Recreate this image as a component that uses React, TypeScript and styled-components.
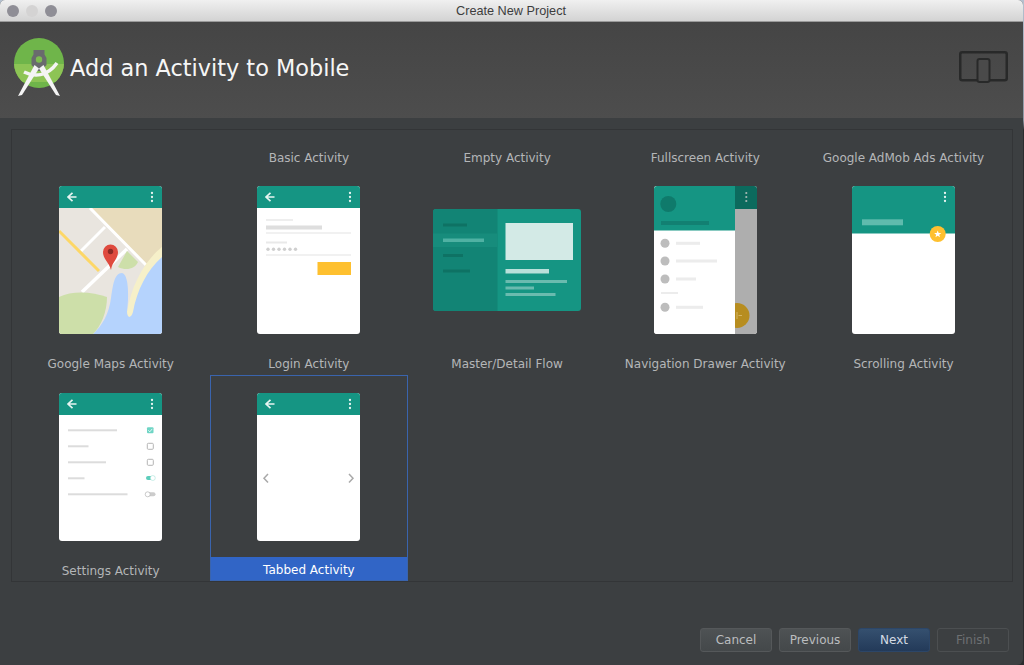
import React from "react";
import styled, { createGlobalStyle } from "styled-components";

const GlobalStyle = createGlobalStyle`
  html, body {
    margin: 0;
    padding: 0;
    width: 1024px;
    height: 665px;
    overflow: hidden;
    background: linear-gradient(#b4c0cf 0, #8f98a3 120px, #2a2c2e 130px, #2a2c2e 100%);
    font-family: "DejaVu Sans", sans-serif;
  }
`;

const Window = styled.div`
  width: 1023px;
  height: 665px;
  display: flex;
  flex-direction: column;
  background: #3c3f41;
  border-radius: 5px 5px 6px 0;
  overflow: hidden;
`;

const TitleBar = styled.div`
  height: 21px;
  flex: none;
  display: flex;
  align-items: center;
  position: relative;
  background: linear-gradient(#f0f0f0, #d3d3d3);
  border-bottom: 1px solid #9a9a9a;
`;

const Lights = styled.div`
  display: flex;
  gap: 7px;
  padding-left: 7px;
`;

const Light = styled.span<{ $dim?: boolean }>`
  width: 12px;
  height: 12px;
  border-radius: 50%;
  background: ${(p) => (p.$dim ? "#d4d3d3" : "#8f8e96")};
`;

const WindowTitle = styled.div`
  position: absolute;
  left: 0;
  right: 1px;
  text-align: center;
  font-family: "Liberation Sans", sans-serif;
  font-size: 12.7px;
  color: #3d3d3d;
`;

const Header = styled.div`
  height: 96px;
  flex: none;
  box-sizing: border-box;
  display: flex;
  align-items: flex-start;
  justify-content: space-between;
  padding: 16px 14px 0 14px;
  background: linear-gradient(#454545, #4d4d4d);
`;

const Brand = styled.div`
  display: flex;
  align-items: flex-start;
  gap: 6px;
`;

const Heading = styled.h1`
  margin: 14px 0 0;
  font-size: 22.4px;
  line-height: 32px;
  font-weight: 400;
  color: #f6f6f6;
`;

const DeviceIcon = styled.svg`
  margin-top: 13px;
`;

const Panel = styled.div`
  width: 1000px;
  margin: 11px 0 0 11px;
  border: 1px solid #333537;
  padding-top: 14px;
  flex: none;
`;

const Grid = styled.div`
  display: grid;
  margin-left: -0.4px;
  grid-template-columns: repeat(5, 198.2px);
  grid-template-rows: 24px 206.6px 206.6px;
`;

const Caption = styled.div<{ $selected?: boolean }>`
  height: 24px;
  box-sizing: border-box;
  padding-top: ${(p) => (p.$selected ? 1 : 1.8)}px;
  line-height: 24px;
  text-align: center;
  white-space: nowrap;
  font-size: 12px;
  color: ${(p) => (p.$selected ? "#ffffff" : "#b4b6b8")};
  background: ${(p) => (p.$selected ? "#3165c6" : "transparent")};
`;

const Cell = styled.div<{ $selected?: boolean }>`
  display: flex;
  flex-direction: column;
  align-items: stretch;
  justify-content: space-between;
  box-sizing: border-box;
  padding-top: 18px;
  position: relative;
  &::before {
    content: "";
    display: ${(p) => (p.$selected ? "block" : "none")};
    position: absolute;
    inset: 0;
    border: 1px solid #3a64ad;
    pointer-events: none;
  }
`;

const ThumbSlot = styled.div`
  height: 148px;
  display: flex;
  align-items: center;
  justify-content: center;
`;

const Thumb = styled.div<{ $wide?: boolean }>`
  width: ${(p) => (p.$wide ? 148 : 103)}px;
  height: ${(p) => (p.$wide ? 102 : 148)}px;
  border-radius: 3px;
  overflow: hidden;
  filter: blur(0.35px);
  svg {
    display: block;
  }
`;

const Footer = styled.div`
  display: flex;
  justify-content: flex-end;
  gap: 7px;
  margin-top: 46px;
  padding-right: 14px;
`;

const Button = styled.button<{ $variant?: "primary" | "disabled" }>`
  width: 72px;
  height: 24px;
  padding: 0;
  border-radius: 3px;
  font-family: "DejaVu Sans", sans-serif;
  font-size: 12px;
  border: 1px solid
    ${(p) => (p.$variant === "primary" ? "#2c4668" : p.$variant === "disabled" ? "#4c4f51" : "#55585a")};
  color: ${(p) => (p.$variant === "primary" ? "#d4dbe4" : p.$variant === "disabled" ? "#6d7072" : "#bbbdbf")};
  background: ${(p) =>
    p.$variant === "primary"
      ? "linear-gradient(#35506f, #233a59)"
      : p.$variant === "disabled"
      ? "transparent"
      : "linear-gradient(#4e5254, #44484a)"};
`;

const TEAL = "#159583";

const Logo = () => (
  <svg width="50" height="60" viewBox="0 0 50 60">
    <defs>
      <clipPath id="logoDisc">
        <circle cx="25" cy="25" r="25" />
      </clipPath>
    </defs>
    <circle cx="25" cy="25" r="25" fill="#6fb54a" />
    <g clipPath="url(#logoDisc)">
      <rect x="0" y="26" width="50" height="18" fill="#8dc455" />
    </g>
    <path d="M19.500 12H30.500V16.500L32.500 20V27L27 33H23L17.500 27V20L19.500 16.500Z" fill="#696b6d" />
    <circle cx="25" cy="21.500" r="3.200" fill="#7dbb50" />
    <path d="M20.500 27L25 30.500L8 57L4 58Z" fill="#f4f4f4" />
    <path d="M29.500 27L25 30.500L42 57L46 58Z" fill="#f4f4f4" />
    <path d="M10 34C20 39 33 39 43 25" fill="none" stroke="#f4f4f4" strokeWidth="3.500" />
  </svg>
);

const AppBar = ({ back = true, tint = "#e6f4f1" }: { back?: boolean; tint?: string }) => (
  <g>
    {back && <path d="M17.500 11H9.500M13.500 6.800L9 11L13.500 15.200" fill="none" stroke={tint} strokeWidth="1.700" />}
    <circle cx="93" cy="7" r="1.150" fill={tint} />
    <circle cx="93" cy="11" r="1.150" fill={tint} />
    <circle cx="93" cy="15" r="1.150" fill={tint} />
  </g>
);

const PhoneSvg = ({ children }: { children: React.ReactNode }) => (
  <svg width="103" height="148" viewBox="0 0 103 148">
    <rect width="103" height="148" fill="#ffffff" />
    {children}
  </svg>
);

const MapsThumb = () => (
  <PhoneSvg>
    <rect y="22" width="103" height="126" fill="#e9e5df" />
    <path d="M33 22H103V62L88 80Z" fill="#e8dcbc" />
    <path d="M31 22L87 79M46 41L22 65" stroke="#fff" strokeWidth="3" fill="none" />
    <path d="M68 63L23 106" stroke="#fff" strokeWidth="3.500" fill="none" />
    <path d="M0 45L40 85" stroke="#fdd766" strokeWidth="3" fill="none" />
    <path d="M68 65L79 76C76 83 67 85 59 81Z" fill="#cddfa9" />
    <path d="M103 61C86 74 72 100 68 126C68 132 72 133 74 127C78 105 90 84 103 72Z" fill="#f6f0c9" />
    <path d="M103 71C88 84 78 104 74 126C72 133 68 132 68 126C70 112 70 88 63 87C55 87 54 100 52 112C50 128 43 140 34 148H103Z" fill="#b5d3fd" />
    <path d="M0 111C14 104 34 106 48 111C48 126 42 140 34 148H0Z" fill="#cddfa9" />
    <path d="M52 84C50 76 44 73 44 66A7.500 7.500 0 0 1 59 66C59 73 53 76 52 84Z" fill="#df4a3e" />
    <circle cx="51.500" cy="65.500" r="2.700" fill="#8d2a24" />
    <rect width="103" height="22" fill={TEAL} />
    <AppBar />
  </PhoneSvg>
);

const LoginThumb = () => (
  <PhoneSvg>
    <rect width="103" height="22" fill={TEAL} />
    <AppBar />
    <rect x="9" y="33" width="27" height="2" fill="#eeeeee" />
    <rect x="9" y="39.500" width="56" height="4" fill="#dedede" />
    <rect x="9" y="46" width="85" height="2" fill="#f1f1f1" />
    <rect x="9" y="55.500" width="21" height="2" fill="#e9e9e9" />
    {[11, 16.5, 22, 27.5, 33, 38.5].map((x) => (
      <circle key={x} cx={x} cy="63.200" r="1.700" fill="#cfcfcf" />
    ))}
    <rect x="9" y="68" width="85" height="2" fill="#f1f1f1" />
    <rect x="60.500" y="76" width="33.500" height="13" fill="#fec02f" />
  </PhoneSvg>
);

const DetailThumb = () => (
  <svg width="148" height="102" viewBox="0 0 148 102">
    <rect width="148" height="102" fill={TEAL} />
    <rect width="64.500" height="102" fill="#128475" />
    <rect y="24.500" width="64.500" height="13.500" fill="#178c7c" />
    <rect x="10" y="14.500" width="24" height="3" fill="#0e7264" />
    <rect x="10" y="29.500" width="41" height="3.500" fill="#4fb1a3" />
    <rect x="10" y="45" width="20" height="3" fill="#0e7264" />
    <rect x="10" y="60.500" width="27" height="3" fill="#0e7264" />
    <rect x="72.500" y="14" width="67.500" height="37" fill="#d3eae6" />
    <rect x="72.500" y="60" width="43.500" height="4.500" fill="#b9e0da" />
    <rect x="72.500" y="71" width="61.500" height="3" fill="#6abbaf" />
    <rect x="72.500" y="77.500" width="28.500" height="3" fill="#6abbaf" />
    <rect x="72.500" y="84" width="50" height="3" fill="#6abbaf" />
  </svg>
);

const DrawerThumb = () => (
  <PhoneSvg>
    <rect x="81" width="22" height="148" fill="#aeaeae" />
    <rect x="81" width="22" height="23" fill="#0c6a5d" />
    <circle cx="92.300" cy="7" r="1.100" fill="#a6b8b4" />
    <circle cx="92.300" cy="11" r="1.100" fill="#a6b8b4" />
    <circle cx="92.300" cy="15" r="1.100" fill="#a6b8b4" />
    <circle cx="83" cy="129.500" r="12.500" fill="#b78d20" />
    <path d="M83 126V133M84.500 129.500H88" stroke="#d4b563" strokeWidth="1" />
    <rect width="81" height="148" fill="#ffffff" />
    <rect width="81" height="44.500" fill={TEAL} />
    <circle cx="14.300" cy="18" r="8" fill="#0f7a6b" />
    <rect x="7" y="35" width="48" height="4" fill="#128072" />
    {[
      [57.3, 24],
      [75, 41],
      [93, 20],
      [121.3, 27],
    ].map(([y, w]) => (
      <g key={y}>
        <circle cx="11" cy={y} r="4.500" fill="#bdbdbd" />
        <rect x="22" y={y - 1.5} width={w} height="3" fill="#ececec" />
      </g>
    ))}
    <rect x="7" y="106" width="17" height="2" fill="#ececec" />
  </PhoneSvg>
);

const ScrollingThumb = () => (
  <PhoneSvg>
    <rect width="103" height="47.500" fill={TEAL} />
    <AppBar back={false} />
    <rect x="10" y="33.300" width="41" height="6" fill="#5fbbad" />
    <circle cx="85.700" cy="48" r="8" fill="#fec02f" />
    <path d="M85.700 44.400L86.700 47H89.300L87.200 48.700L88 51.300L85.700 49.700L83.400 51.300L84.200 48.700L82.100 47H84.700Z" fill="#ffffff" />
  </PhoneSvg>
);

const SettingsThumb = () => (
  <PhoneSvg>
    <rect width="103" height="22" fill={TEAL} />
    <AppBar />
    {[
      [37.3, 49],
      [53.3, 20.5],
      [69.3, 38],
      [85.3, 16.5],
      [101.3, 59.5],
    ].map(([y, w]) => (
      <rect key={y} x="9" y={y - 1} width={w} height="2" fill="#dcdcdc" />
    ))}
    <rect x="88" y="34.300" width="6.500" height="6" rx="1" fill="#6fd5c5" />
    <path d="M89.300 37.300L90.800 38.800L93.200 35.900" fill="none" stroke="#fff" strokeWidth="0.800" />
    <rect x="88.300" y="50.300" width="6" height="6" rx="1" fill="none" stroke="#b5b5b5" strokeWidth="1" />
    <rect x="88.300" y="66.300" width="6" height="6" rx="1" fill="none" stroke="#b5b5b5" strokeWidth="1" />
    <rect x="87" y="83" width="9" height="4" rx="2" fill="#5ccdbb" />
    <circle cx="93.800" cy="85" r="2.500" fill="#fff" stroke="#9adfd3" strokeWidth="0.500" />
    <rect x="87.500" y="99.300" width="9" height="4" rx="2" fill="#cccccc" />
    <circle cx="88.700" cy="101.300" r="2.500" fill="#fff" stroke="#aaa" strokeWidth="0.600" />
  </PhoneSvg>
);

const TabbedThumb = () => (
  <PhoneSvg>
    <rect width="103" height="22" fill={TEAL} />
    <AppBar />
    <path d="M11 81L7 85.300L11 89.600" fill="none" stroke="#a9a9a9" strokeWidth="1.500" />
    <path d="M92 81L96 85.300L92 89.600" fill="none" stroke="#a9a9a9" strokeWidth="1.500" />
  </PhoneSvg>
);

const activities = [
  { name: "Google Maps Activity", thumb: <MapsThumb /> },
  { name: "Login Activity", thumb: <LoginThumb /> },
  { name: "Master/Detail Flow", thumb: <DetailThumb />, wide: true },
  { name: "Navigation Drawer Activity", thumb: <DrawerThumb /> },
  { name: "Scrolling Activity", thumb: <ScrollingThumb /> },
  { name: "Settings Activity", thumb: <SettingsThumb /> },
  { name: "Tabbed Activity", thumb: <TabbedThumb />, selected: true },
];

// the row above is scrolled off, only its captions still show
const scrolledCaptions = ["", "Basic Activity", "Empty Activity", "Fullscreen Activity", "Google AdMob Ads Activity"];

export default function App() {
  return (
    <>
      <GlobalStyle />
      <Window>
        <TitleBar>
          <Lights>
            <Light />
            <Light $dim />
            <Light />
          </Lights>
          <WindowTitle>Create New Project</WindowTitle>
        </TitleBar>
        <Header>
          <Brand>
            <Logo />
            <Heading>Add an Activity to Mobile</Heading>
          </Brand>
          <DeviceIcon width="50" height="34" viewBox="0 0 50 34">
            <rect x="1.250" y="1.250" width="46.500" height="28" rx="2" fill="none" stroke="#282929" strokeWidth="2.500" />
            <rect x="18.500" y="8" width="12" height="23" rx="2" fill="#4a4a4a" stroke="#282929" strokeWidth="2" />
          </DeviceIcon>
        </Header>
        <Panel>
          <Grid>
            {scrolledCaptions.map((name, i) => (
              <Caption key={i}>{name}</Caption>
            ))}
            {activities.map((a) => (
              <Cell key={a.name} $selected={a.selected}>
                <ThumbSlot>
                  <Thumb $wide={a.wide}>{a.thumb}</Thumb>
                </ThumbSlot>
                <Caption $selected={a.selected}>{a.name}</Caption>
              </Cell>
            ))}
          </Grid>
        </Panel>
        <Footer>
          <Button>Cancel</Button>
          <Button>Previous</Button>
          <Button $variant="primary">Next</Button>
          <Button $variant="disabled">Finish</Button>
        </Footer>
      </Window>
    </>
  );
}
